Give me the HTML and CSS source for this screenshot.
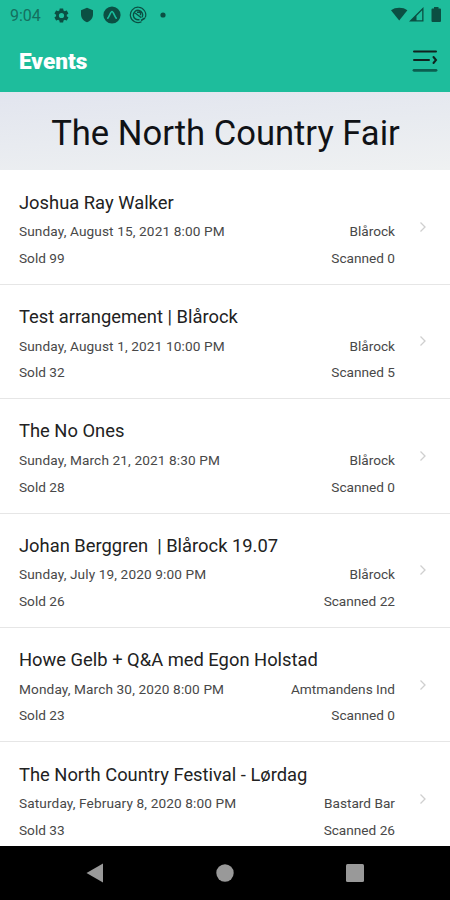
FILE: index.html
```html
<!DOCTYPE html>
<html lang="en">
<head>
<meta charset="utf-8">
<title>Events</title>
<link rel="stylesheet" href="styles.css">
</head>
<body>
<div class="screen">
  <div class="status">
    <span class="clock">9:04</span>
    <div class="notices">
      <svg width="17" height="17" viewBox="0 0 24 24"><path fill="currentColor" fill-rule="evenodd" d="M19.4 13c.1-.7.1-1.300 0-2l2.100-1.600c.2-.2.2-.4.100-.6l-2-3.500c-.1-.2-.4-.3-.6-.2l-2.500 1c-.5-.4-1.100-.7-1.700-1l-.4-2.600c0-.3-.2-.5-.5-.5h-4c-.3 0-.5.200-.5.500L9 5.100c-.6.300-1.200.600-1.700 1l-2.500-1c-.2-.1-.5 0-.6.200l-2 3.500c-.1.200-.1.400.1.600L4.400 11c-.1.700-.1 1.300 0 2l-2.100 1.600c-.2.200-.2.400-.1.600l2 3.500c.1.200.4.300.6.200l2.500-1c.5.400 1.100.700 1.700 1l.4 2.600c0 .3.200.5.500.5h4c.3 0 .5-.2.500-.5l.4-2.600c.6-.3 1.200-.6 1.700-1l2.500 1c.2.100.5 0 .6-.2l2-3.500c.1-.2.100-.4-.1-.6zM12 8.300a3.700 3.700 0 1 0 0 7.400 3.700 3.700 0 0 0 0-7.400z"/></svg>
      <svg width="16" height="16" viewBox="0 0 16 16"><path fill="currentColor" d="M8 .8l6 2.400v4.300c0 3.600-2.500 6.500-6 7.700-3.500-1.200-6-4.100-6-7.700V3.200z"/></svg>
      <svg width="18" height="18" viewBox="0 0 18 18"><circle cx="9" cy="9" r="8.600" fill="currentColor"/><path d="M4.800 12.200C6.400 10.600 7.600 5.500 9 5.500s2.600 5.100 4.200 6.700" fill="none" stroke="#1abc9c" stroke-width="1.700" stroke-linecap="round"/></svg>
      <svg width="18" height="18" viewBox="0 0 18 18" fill="none" stroke="currentColor"><path d="M12.500 15.800A7.700 7.700 0 1 1 16.300 11.500" stroke-width="1.200"/><path d="M13.200 11.200A4.700 4.700 0 1 0 10.500 13.500M5.500 6.500l6.800 5.200M8 6.200h3.500v3" stroke-width="1.400"/><path d="M12 14.500l4-2.500" stroke-width="1.500"/></svg>
      <svg width="6" height="6" viewBox="0 0 6 6"><circle cx="3" cy="3" r="2.600" fill="currentColor"/></svg>
    </div>
    <svg class="signals" width="52" height="18" viewBox="0 0 52 18"><path fill="currentColor" d="M0 4.200C4.500.900 12 .900 16.400 4.200L8.200 14.500z"/><path fill="currentColor" fill-rule="evenodd" d="M18 15.500L32.500 1v14.500zM25.500 10v4.200h5.700V4.300z"/><path fill="currentColor" d="M43 1h4.500v1.500h1.500a1 1 0 0 1 1 1V15a1 1 0 0 1-1 1h-7.500a1 1 0 0 1-1-1V3.500a1 1 0 0 1 1-1H43z"/></svg>
  </div>
  <header class="appbar">
    <h1>Events</h1>
    <svg width="26" height="24" viewBox="0 0 26 24" fill="none" stroke="#10231f" stroke-width="2" stroke-linecap="round"><path d="M2 2.500h22M2 11h15"/><path d="M21.500 8l2.500 3-2.500 3"/><path d="M2 21.300h22" stroke="#0b5f50" stroke-width="2.800"/></svg>
  </header>
  <div class="banner">The North Country Fair</div>
  <main class="list">
    <article class="event"><div class="info"><h2>Joshua Ray Walker</h2><p><span class="when">Sunday, August 15, 2021 8:00 PM</span><span>Blårock</span></p><p><span>Sold 99</span><span>Scanned 0</span></p></div><svg class="chev" viewBox="0 0 8 12"><path d="M1.500 1.500L6 6l-4.500 4.500"/></svg></article>
    <article class="event"><div class="info"><h2>Test arrangement | Blårock</h2><p><span class="when">Sunday, August 1, 2021 10:00 PM</span><span>Blårock</span></p><p><span>Sold 32</span><span>Scanned 5</span></p></div><svg class="chev" viewBox="0 0 8 12"><path d="M1.500 1.500L6 6l-4.500 4.500"/></svg></article>
    <article class="event"><div class="info"><h2>The No Ones</h2><p><span class="when">Sunday, March 21, 2021 8:30 PM</span><span>Blårock</span></p><p><span>Sold 28</span><span>Scanned 0</span></p></div><svg class="chev" viewBox="0 0 8 12"><path d="M1.500 1.500L6 6l-4.500 4.500"/></svg></article>
    <article class="event"><div class="info"><h2>Johan Berggren  | Blårock 19.07</h2><p><span class="when">Sunday, July 19, 2020 9:00 PM</span><span>Blårock</span></p><p><span>Sold 26</span><span>Scanned 22</span></p></div><svg class="chev" viewBox="0 0 8 12"><path d="M1.500 1.500L6 6l-4.500 4.500"/></svg></article>
    <article class="event"><div class="info"><h2>Howe Gelb + Q&amp;A med Egon Holstad</h2><p><span class="when">Monday, March 30, 2020 8:00 PM</span><span>Amtmandens Ind</span></p><p><span>Sold 23</span><span>Scanned 0</span></p></div><svg class="chev" viewBox="0 0 8 12"><path d="M1.500 1.500L6 6l-4.500 4.500"/></svg></article>
    <article class="event"><div class="info"><h2>The North Country Festival - Lørdag</h2><p><span class="when">Saturday, February 8, 2020 8:00 PM</span><span>Bastard Bar</span></p><p><span>Sold 33</span><span>Scanned 26</span></p></div><svg class="chev" viewBox="0 0 8 12"><path d="M1.500 1.500L6 6l-4.500 4.500"/></svg></article>
  </main>
  <nav class="nav">
    <svg width="18" height="20" viewBox="0 0 18 20"><path fill="#999" d="M.5 10L17 .5v19z"/></svg>
    <svg width="18" height="18" viewBox="0 0 18 18"><circle cx="9" cy="9" r="8.700" fill="#999"/></svg>
    <svg width="18" height="18" viewBox="0 0 18 18"><rect width="18" height="18" rx="1.500" fill="#999"/></svg>
  </nav>
</div>
</body>
</html>
```
FILE: styles.css
```css
* { box-sizing: border-box; }
body { margin: 0; font-family: Roboto, "Liberation Sans", sans-serif; color: #222; background: #fff; }
h1, h2, p { margin: 0; font-weight: 400; }
svg { display: block; flex: none; }
.screen { width: 450px; height: 900px; display: flex; flex-direction: column; overflow: hidden; }
.status { height: 30px; flex: none; display: flex; align-items: center; padding: 0 7px 0 10px; background: #1ebd9c; color: #0b4f43; }
.clock { width: 43px; font-size: 16px; color: #14705f; }
.notices { display: flex; align-items: center; gap: 8px; flex: 1; }
.notices svg:first-child { margin-right: 1px; }
.notices svg:last-child { margin-left: 5px; }
.appbar { height: 62px; flex: none; display: flex; align-items: center; justify-content: space-between; padding: 0 12px 0 19px; background: #1ebd9c; }
.appbar h1 { font-size: 22.600px; font-weight: 900; color: #fff; }
.banner { height: 78px; flex: none; display: flex; align-items: center; justify-content: center; padding: 3px 0 0 1px; font-size: 34.600px; color: #101216; background: linear-gradient(176deg, #eff1f2, #e8ebf0 50%, #e2e5ef); white-space: nowrap; }
.list { flex: 1; min-height: 0; overflow: hidden; padding-top: .4px; }
.event { height: 114.400px; display: flex; align-items: center; padding: 6px 23px 0 19px; border-bottom: 1.500px solid #e6e6e6; }
.banner { background: linear-gradient(176deg, #e2e5ef, #e8ebf0 50%, #eff1f2); }
.info { width: 376px; }
.event h2 { font-size: 18.350px; line-height: 28px; white-space: pre; }
.event p { display: flex; justify-content: space-between; font-size: 13.650px; line-height: 26.700px; color: #484848; white-space: nowrap; }
.event .when { letter-spacing: .12px; }
.event .info p:nth-of-type(1) { padding-top: 1.500px; }
.chev { width: 8px; height: 12px; margin: 0 0 6px 24px; fill: none; stroke: #cfcfcf; stroke-width: 1.300; }
.nav { height: 54px; flex: none; display: flex; align-items: center; justify-content: space-between; padding: 0 86px; background: #000; }
```
